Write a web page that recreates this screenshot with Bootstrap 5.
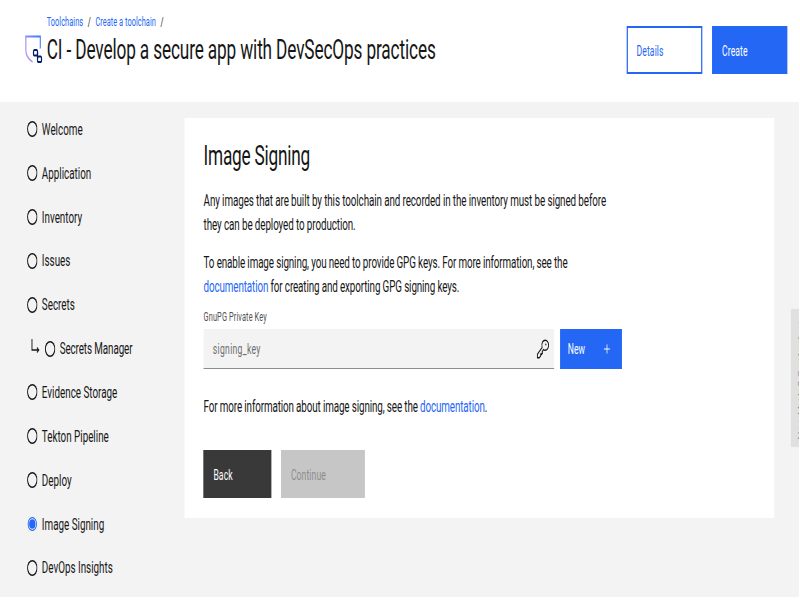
<!DOCTYPE html>
<html lang="en">
<head>
<meta charset="utf-8">
<meta name="viewport" content="width=device-width, initial-scale=1">
<title>CI - Develop a secure app with DevSecOps practices</title>
<link rel="stylesheet" href="https://cdn.jsdelivr.net/npm/bootstrap@5.3.0/dist/css/bootstrap.min.css">
<style>
  body { font-family: Roboto, "Liberation Sans", sans-serif; color: #161616; background: #fff; }
  .frame { width: 799px; height: 597px; }
  .stage { width: 1299px; height: 597px; transform: scaleX(.615); transform-origin: 0 0; background: #f3f3f3; font-size: 16px; line-height: 24px; overflow: hidden; }
  a { color: #2467f5; text-decoration: none; }
  .top-bar { height: 102px; padding: 14px 19px 0 39px; }
  .crumbs { font-size: 12px; line-height: 16px; padding-left: 37px; gap: 7.5px; letter-spacing: .08px; }
  .page-title { font-size: 28px; line-height: 36px; font-weight: 400; letter-spacing: -.22px; }
  .title-row { gap: 5px; margin-top: 2px; }
  .act { border-radius: 0; height: 48px; font-size: 14px; line-height: 20px; padding: 1px 14px 0; text-align: left; border: 2px solid #2467f5; letter-spacing: .16px; }
  .act-blue { background: #2467f5; color: #fff; }
  .act-line { background: #fff; color: #2467f5; }
  .top-acts { gap: 16px; padding-top: 12px; }
  .top-acts .act { width: 122px; }
  .top-acts .act-line { width: 123px; }
  .steps { width: 300px; padding: 6px 0 0 44px; }
  .step { height: 43.85px; gap: 8px; }
  .ring { width: 17px; height: 16px; box-shadow: inset 0 0 0 1.6px #161616; border-radius: 50%; flex: none; margin: -1px -1px 0 0; }
  .ring-on { width: 15px; height: 14px; margin-left: 1px; margin-right: 0; border: 1px solid #2467f5; background: #2467f5; box-shadow: inset 0 0 0 1.3px #f3f3f3; }
  .sub-step { padding-left: 6px; letter-spacing: -.15px; }
  .panel { width: 959px; height: 400px; margin-top: 16px; padding: 20px 31px 0; background: #fff; }
  .panel h2 { font-size: 28px; line-height: 36px; font-weight: 400; margin: 0 0 15px; letter-spacing: -.35px; }
  .panel p { margin: 0 0 14px; white-space: nowrap; letter-spacing: -.16px; }
  .panel .tight { letter-spacing: -.2px; }
  .key-label { font-size: 12px; line-height: 16px; color: #525252; letter-spacing: .2px; margin: -4px 0 4px; }
  .key-box { width: 570px; height: 40px; background: #f3f3f3; border-bottom: 1px solid #8d8d8d; color: #6f6f6f; padding: 0 7px 0 15px; font-size: 14px; letter-spacing: .5px; }
  .new-btn { width: 100px; height: 40px; padding: 0 16px 0 10px; margin-left: 10px; }
  .panel .more-info { margin: 26px 0 31px; letter-spacing: -.2px; }
  .act-dark { width: 110px; background: #393939; border-color: #393939; color: #fff; }
  .act-off { width: 136px; background: #c6c6c6; border-color: #c6c6c6; color: #8d8d8d; }
  .side-tab { position: absolute; right: 0; top: 309px; width: 13px; height: 138px; background: #e0e0e0; overflow: hidden; }
  .side-tab span { position: absolute; left: 9px; top: 11px; writing-mode: vertical-rl; transform: rotate(180deg); font-size: 12px; line-height: 14px; color: #8d8d8d; white-space: nowrap; }
</style>
<script src="https://cdn.jsdelivr.net/npm/bootstrap@5.3.0/dist/js/bootstrap.bundle.min.js"></script>
</head>
<body>
<div class="frame overflow-hidden">
<div class="stage position-relative">
  <header class="top-bar bg-white d-flex justify-content-between align-items-start">
    <div>
      <nav class="crumbs d-flex"><a href="#">Toolchains</a><span>/</span><a href="#">Create a toolchain</a><span>/</span></nav>
      <div class="title-row d-flex align-items-center">
        <svg width="32" height="32" viewBox="0 0 32 32" fill="none">
          <defs><linearGradient id="shield" x1="2" y1="16" x2="26" y2="4" gradientUnits="userSpaceOnUse"><stop stop-color="#b28df5"/><stop offset="1" stop-color="#3f7df7"/></linearGradient></defs>
          <path d="M26.500 14.500V2.500H3v14c0 5 4 8.500 11 11.500" stroke="url(#shield)" stroke-width="1.800"/>
          <rect x="15.500" y="16" width="6.500" height="5.500" rx="1.500" stroke="#001d6c" stroke-width="2"/>
          <rect x="22" y="22.500" width="6.500" height="5.500" rx="1.500" stroke="#001d6c" stroke-width="2"/>
          <path d="M22 19v5" stroke="#001d6c" stroke-width="2"/>
        </svg>
        <h1 class="page-title mb-0">CI - Develop a secure app with DevSecOps practices</h1>
      </div>
    </div>
    <div class="top-acts d-flex">
      <button class="btn act act-line">Details</button>
      <button class="btn act act-blue">Create</button>
    </div>
  </header>
  <div class="d-flex">
    <nav class="steps">
      <div class="step d-flex align-items-center"><i class="ring"></i><span>Welcome</span></div>
      <div class="step d-flex align-items-center"><i class="ring"></i><span>Application</span></div>
      <div class="step d-flex align-items-center"><i class="ring"></i><span>Inventory</span></div>
      <div class="step d-flex align-items-center"><i class="ring"></i><span>Issues</span></div>
      <div class="step d-flex align-items-center"><i class="ring"></i><span>Secrets</span></div>
      <div class="step sub-step d-flex align-items-center">
        <svg width="15" height="20" viewBox="0 0 15 20" fill="none" stroke="#161616" stroke-width="1.500"><path d="M2 0v11h11M10 8.500l3 2.500-3 2.500"/></svg>
        <i class="ring"></i><span>Secrets Manager</span>
      </div>
      <div class="step d-flex align-items-center"><i class="ring"></i><span>Evidence Storage</span></div>
      <div class="step d-flex align-items-center"><i class="ring"></i><span>Tekton Pipeline</span></div>
      <div class="step d-flex align-items-center"><i class="ring"></i><span>Deploy</span></div>
      <div class="step d-flex align-items-center"><i class="ring ring-on"></i><span>Image Signing</span></div>
      <div class="step d-flex align-items-center"><i class="ring"></i><span>DevOps Insights</span></div>
    </nav>
    <main class="panel">
      <h2>Image Signing</h2>
      <p>Any images that are built by this toolchain and recorded in the inventory must be signed before<br>they can be deployed to production.</p>
      <p class="tight">To enable image signing, you need to provide GPG keys. For more information, see the<br><a href="#">documentation</a> for creating and exporting GPG signing keys.</p>
      <div class="key-label">GnuPG Private Key</div>
      <div class="d-flex">
        <div class="key-box d-flex align-items-center justify-content-between">
          <span>signing_key</span>
          <svg width="22" height="20" viewBox="0 0 22 20" fill="none" stroke="#161616" stroke-width="1.500"><path d="M9.500 8.500C8 3.500 11 1.200 14.500 1.200c3.200 0 5.500 2.300 5.500 5s-2.300 5-5.500 5c-1 0-2-.2-2.800-.6L9.500 13l.8 1-1.500 1.300-1-.8-.8 1 .7.8L5 18.800H1.800v-3.500z" stroke-linejoin="round"/><circle cx="15.500" cy="5.500" r="1" fill="#161616" stroke="none"/></svg>
        </div>
        <button class="btn act act-blue new-btn d-flex align-items-center justify-content-between"><span>New</span><svg width="12" height="12" viewBox="0 0 12 12" stroke="#fff" stroke-width="1.200"><path d="M6 1.500v9M1 6h10"/></svg></button>
      </div>
      <p class="more-info">For more information about image signing, see the <a href="#">documentation</a>.</p>
      <div class="d-flex gap-3"><button class="btn act act-dark">Back</button><button class="btn act act-off">Continue</button></div>
    </main>
  </div>
  <div class="side-tab"><span>Need help? Contact us</span></div>
</div>
</div>
</body>
</html>
